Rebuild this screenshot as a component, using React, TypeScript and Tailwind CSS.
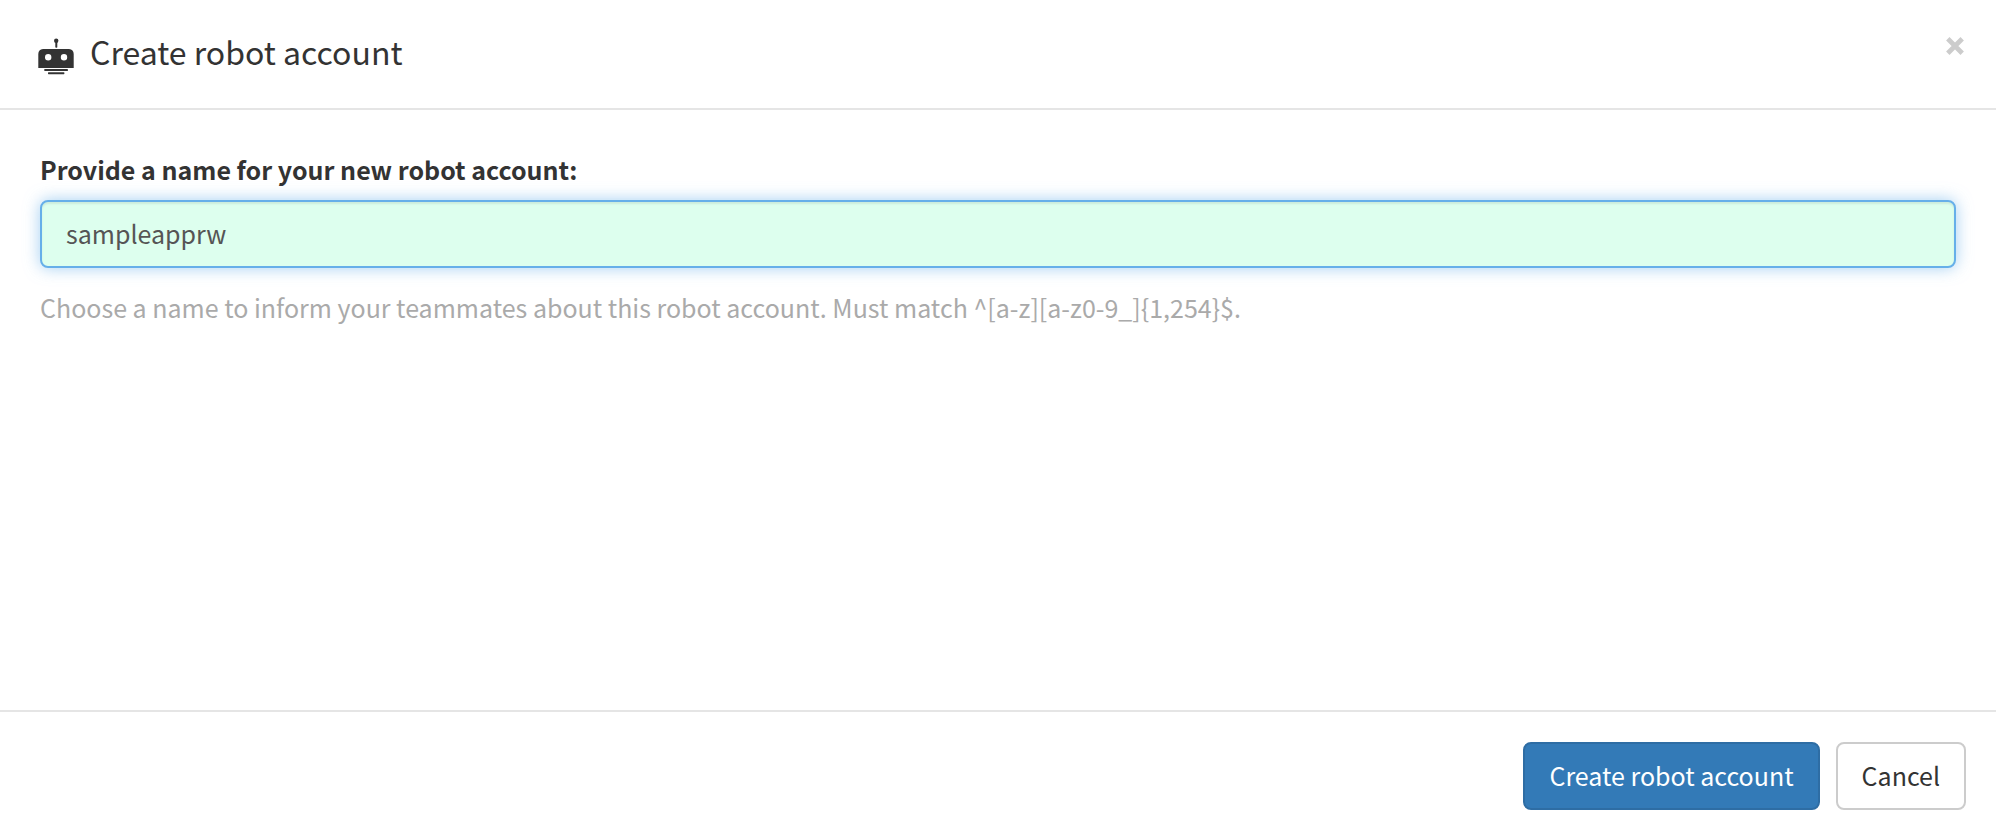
import { useState } from "react";

function RobotIcon() {
  return (
    <svg aria-hidden="true" viewBox="0 0 36 37" className="mt-[10px] h-[37px] w-9 shrink-0" fill="currentColor">
      <circle cx="18.2" cy="2.7" r="2.2" />
      <rect x="17.3" y="3" width="2" height="6.8" rx="0.8" />
      <path
        fillRule="evenodd"
        d="M5 11H31Q35.6 11.3 35.7 16V30H0.3V16Q0.4 11.3 5 11ZM10.2 16a3.2 3.2 0 1 0 0 6.4a3.2 3.2 0 1 0 0-6.4ZM26 16a3.2 3.2 0 1 0 0 6.4a3.2 3.2 0 1 0 0-6.4Z"
      />
      <rect x="6.3" y="31" width="23.6" height="2" rx="0.6" />
      <rect x="10" y="34.2" width="16.4" height="2" rx="0.6" />
    </svg>
  );
}

function CloseIcon() {
  return (
    <svg aria-hidden="true" viewBox="0 0 18 18" className="size-[18px]" stroke="currentColor" strokeWidth="4.8">
      <path d="M1.8 1.8L16.2 16.2M16.2 1.8L1.8 16.2" />
    </svg>
  );
}

export default function App() {
  const [name, setName] = useState("sampleapprw");

  return (
    <div
      role="dialog"
      aria-labelledby="dialog-title"
      className="flex min-h-screen flex-col bg-white font-['Noto_Sans_CJK_SC',sans-serif] text-[25px] leading-[34px] text-[#333]"
    >
      <header className="flex items-start border-b-2 border-[#e5e5e5] pt-7 pr-8 pb-[33px] pl-[38px]">
        <RobotIcon />
        <h1 id="dialog-title" className="ml-4 flex-1 text-[32px] leading-[46px]">
          Create robot account
        </h1>
        <button type="button" aria-label="Close" className="mt-[9px] text-[#ccc]">
          <CloseIcon />
        </button>
      </header>

      <main className="flex-1 px-10 pt-[42px]">
        <label htmlFor="robot-name" className="mb-[14px] block font-bold">
          Provide a name for your new robot account:
        </label>
        <input
          id="robot-name"
          type="text"
          value={name}
          onChange={(event) => setName(event.target.value)}
          className="block w-full rounded-lg border-2 border-[#66afe9] bg-[#ddffee] px-6 pt-[14px] pb-4 text-[#555] shadow-[inset_0_2px_2px_rgba(0,0,0,0.075),0_0_16px_rgba(102,175,233,0.6)] outline-none"
        />
        <p className="mt-[22px] text-[#aaa]">
          Choose a name to inform your teammates about this robot account. Must match ^[a-z][a-z0-9_]
          {"{1,254}$."}
        </p>
      </main>

      <footer className="flex justify-end gap-4 border-t-2 border-[#e5e5e5] px-[30px] pt-[30px] pb-7">
        <button
          type="button"
          className="rounded-lg border-2 border-[#2e6da4] bg-[#337ab7] px-6 pt-[14px] pb-4 text-white"
        >
          Create robot account
        </button>
        <button type="button" className="rounded-lg border-2 border-[#ccc] bg-white px-6 pt-[14px] pb-4">
          Cancel
        </button>
      </footer>
    </div>
  );
}
